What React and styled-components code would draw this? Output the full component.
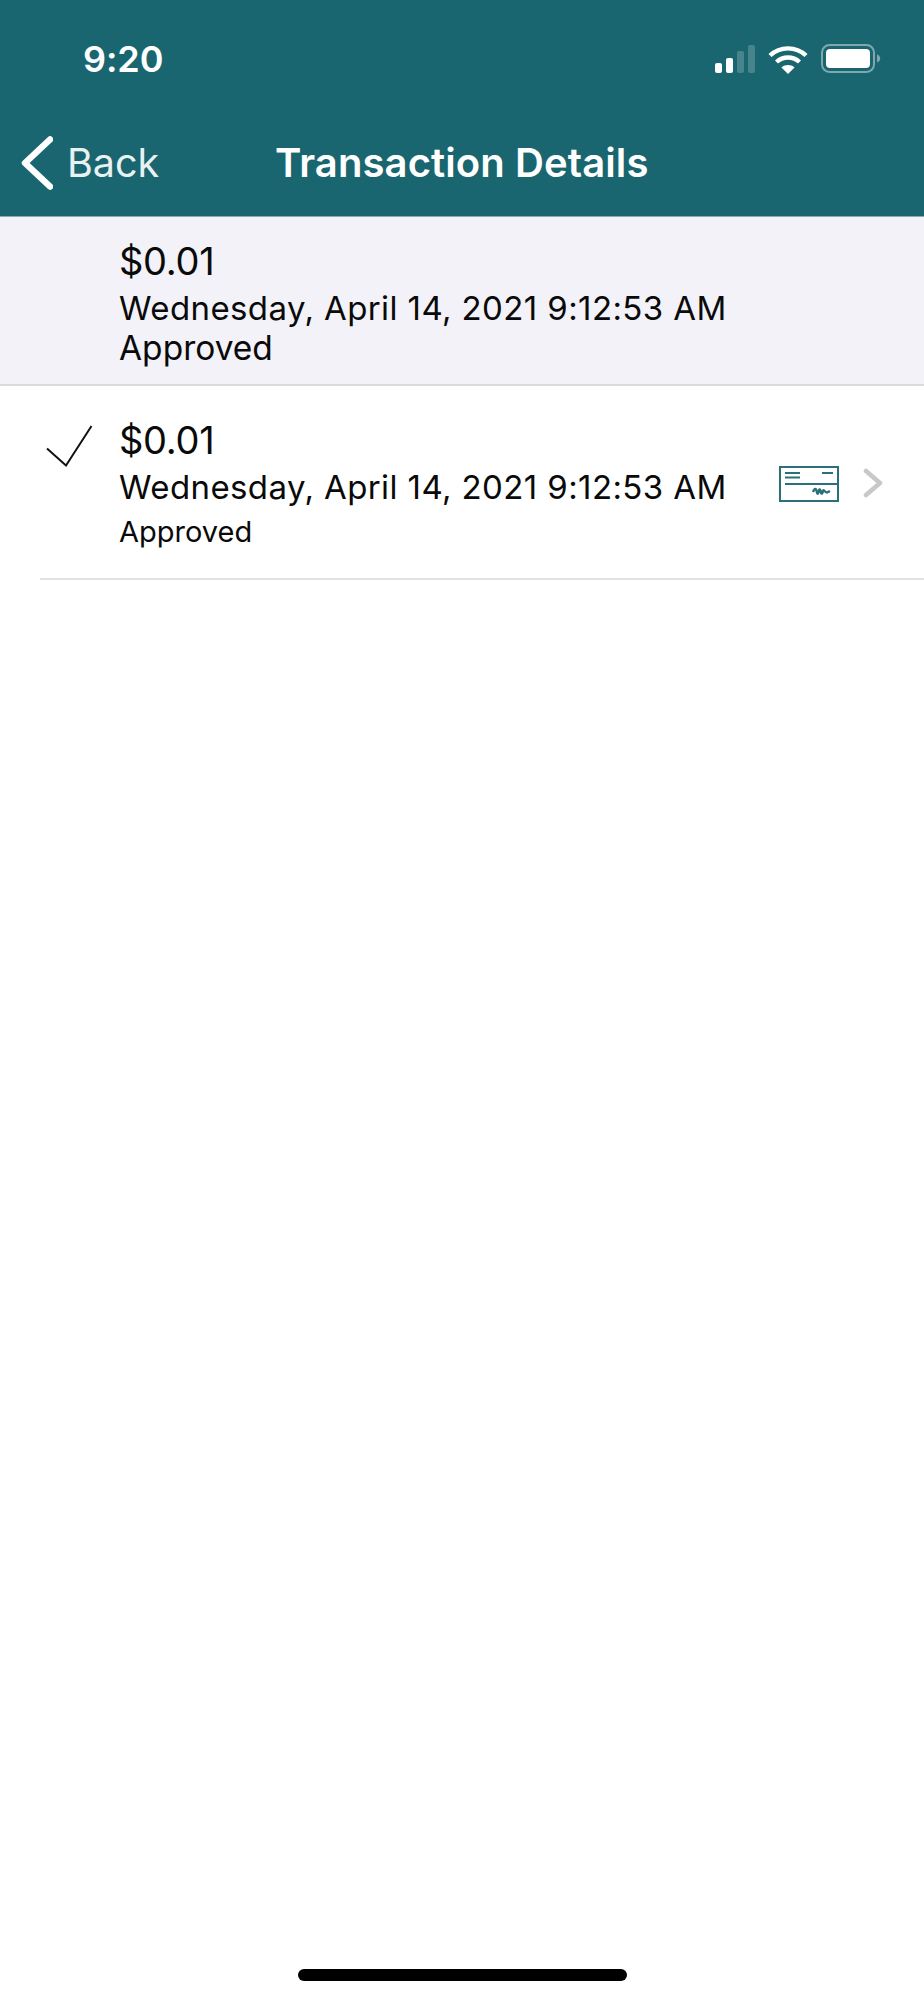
import React from "react";
import styled, { createGlobalStyle } from "styled-components";

const Global = createGlobalStyle`
  html, body { margin: 0; padding: 0; background: #fff; }
  body { font-family: Inter, "Liberation Sans", sans-serif; }
`;
const Page = styled.div`
  width: 924px; height: 2000px; display: flex; flex-direction: column;
  background: #fff; color: #0a0a0a; overflow: hidden;
`;
const Header = styled.header`
  box-sizing: border-box; background: #1a6670; color: #fff;
  border-bottom: 1px solid #8fa9ae; flex: none;
  height: 217px; display: flex; flex-direction: column;
`;
const StatusBar = styled.div`
  height: 118px; box-sizing: border-box; padding: 36px 43px 0 83px;
  display: flex; justify-content: space-between; align-items: flex-start; flex: none;
`;
const Time = styled.span`
  font-size: 36px; font-weight: 600; line-height: 46px; letter-spacing: -0.1px;
`;
const StatusIcons = styled.div`
  display: flex; align-items: center; gap: 13px; padding: 8px 0 0 0;
`;
const SignalSlot = styled.div`
  display: flex; margin-right: -2px;
`;
const NavBar = styled.nav`
  display: grid; grid-template-columns: 275px auto; align-items: center; height: 88px; padding-top: 1px;
`;
const BackLink = styled.div`
  display: flex; align-items: center; gap: 14px; padding-left: 21px;
  font-size: 39.5px; font-weight: 400; line-height: 48px; color: #e9f1f2;
`;
const Title = styled.h1`
  margin: 0; font-size: 40px; font-weight: 600; line-height: 48px; letter-spacing: 0.1px; white-space: nowrap;
`;
const Summary = styled.section`
  height: 169px; box-sizing: border-box; background: #f2f2f8; border-bottom: 2px solid #d9d9de;
  padding: 21px 0 0 119px; flex: none;
`;
const Row = styled.section`
  height: 194px; box-sizing: border-box; margin-left: 40px; border-bottom: 2px solid #e2e2e4;
  display: flex; align-items: flex-start; flex: none; padding-top: 31px;
`;
const Check = styled.div`
  width: 79px; flex: none; padding: 8px 0 0 5px; box-sizing: border-box; height: 60px;
`;
const Info = styled.div`
  flex: none; width: 660px;
`;
const Amount = styled.div`
  font-size: 38px; line-height: 46px; font-weight: 400; letter-spacing: -0.3px;
`;
const DateLine = styled.div`
  font-size: 33px; line-height: 42px; margin-top: 3px; letter-spacing: 0.4px; white-space: nowrap;
`;
const Status = styled.div`
  font-size: ${p => p.$small ? "29px" : "33.5px"};
  line-height: ${p => p.$small ? "40px" : "42px"};
  margin-top: ${p => p.$small ? "4px" : "-2px"};
`;
const Accessory = styled.div`
  display: flex; align-items: flex-start; gap: 24px; padding-top: 49px; flex: none;
`;
const ChevronSlot = styled.div`
  display: flex; padding-top: 2px;
`;
const Spacer = styled.div`flex: 1;`;
const HomeBar = styled.div`
  width: 329px; height: 12px; border-radius: 6px; background: #000; align-self: center;
  margin: 0 0 19px 1px; flex: none;
`;

const Signal = () => (
  <svg width="42" height="28" viewBox="0 0 42 28" fill="#fff">
    <rect x="0" y="18" width="7" height="10" rx="2" />
    <rect x="11" y="13" width="7" height="15" rx="2" />
    <rect x="22" y="6" width="7" height="22" rx="2" opacity=".2" />
    <rect x="33" y="0" width="7" height="28" rx="2" opacity=".2" />
  </svg>
);
const Wifi = () => (
  <svg width="40" height="29" viewBox="0 0 40 29" fill="none" stroke="#fff" strokeWidth="4.4">
    <path d="M2 10.5C12 1 28 1 38 10.5" />
    <path d="M8.5 17C15 11 25 11 31.5 17" />
    <path d="M20 29l-6.5-6.5c3.6-3.2 9.4-3.2 13 0z" fill="#fff" stroke="none" />
  </svg>
);
const Battery = () => (
  <svg width="60" height="30" viewBox="0 0 60 30" fill="none">
    <rect x="1" y="1" width="52" height="27" rx="7.5" stroke="#7fa7ad" strokeWidth="2" />
    <rect x="5" y="5" width="44" height="19" rx="4" fill="#fff" />
    <path d="M56 10.5c2 .6 3.2 2.2 3.2 4s-1.200 3.400-3.200 4z" fill="#7fa7ad" />
  </svg>
);
const BackChevron = () => (
  <svg width="32" height="54" viewBox="0 0 32 54" fill="none" stroke="#fff" strokeWidth="6.500" strokeLinecap="round" strokeLinejoin="round">
    <path d="M29 3.500 4 27l25 23.500" />
  </svg>
);
const CheckMark = () => (
  <svg width="48" height="44" viewBox="0 0 48 44" fill="none" stroke="#111" strokeWidth="2">
    <path d="M2 23.500 21 40.500 46.500 1" />
  </svg>
);
const CheckImage = () => (
  <svg width="60" height="36" viewBox="0 0 60 36" fill="none" stroke="#2a7078" strokeWidth="2">
    <rect x="1" y="1" width="58" height="34" />
    <path d="M6 7h15M6 11.500h15M43 7h11M6 18h54" />
    <path d="M34 26c1-2.500 2-4 3-2.500s1 5 2 4 1-5 2-4 1 5 2 4 1-4 2-3 2 2 3 2 2-1 3-1.500" strokeWidth="2.400" />
  </svg>
);
const Chevron = () => (
  <svg width="20" height="30" viewBox="0 0 20 30" fill="none" stroke="#c8c8cb" strokeWidth="4.5" strokeLinecap="round" strokeLinejoin="round">
    <path d="M3 3l14 12L3 27" />
  </svg>
);

export default function App() {
  return (
    <Page>
      <Global />
      <Header>
        <StatusBar>
          <Time>9:20</Time>
          <StatusIcons>
            <SignalSlot><Signal /></SignalSlot>
            <Wifi />
            <Battery />
          </StatusIcons>
        </StatusBar>
        <NavBar>
          <BackLink><BackChevron />Back</BackLink>
          <Title>Transaction Details</Title>
        </NavBar>
      </Header>
      <Summary>
        <Amount>$0.01</Amount>
        <DateLine>Wednesday, April 14, 2021 9:12:53 AM</DateLine>
        <Status>Approved</Status>
      </Summary>
      <Row>
        <Check><CheckMark /></Check>
        <Info>
          <Amount>$0.01</Amount>
          <DateLine>Wednesday, April 14, 2021 9:12:53 AM</DateLine>
          <Status $small>Approved</Status>
        </Info>
        <Accessory>
          <CheckImage />
          <ChevronSlot><Chevron /></ChevronSlot>
        </Accessory>
      </Row>
      <Spacer />
      <HomeBar />
    </Page>
  );
}
